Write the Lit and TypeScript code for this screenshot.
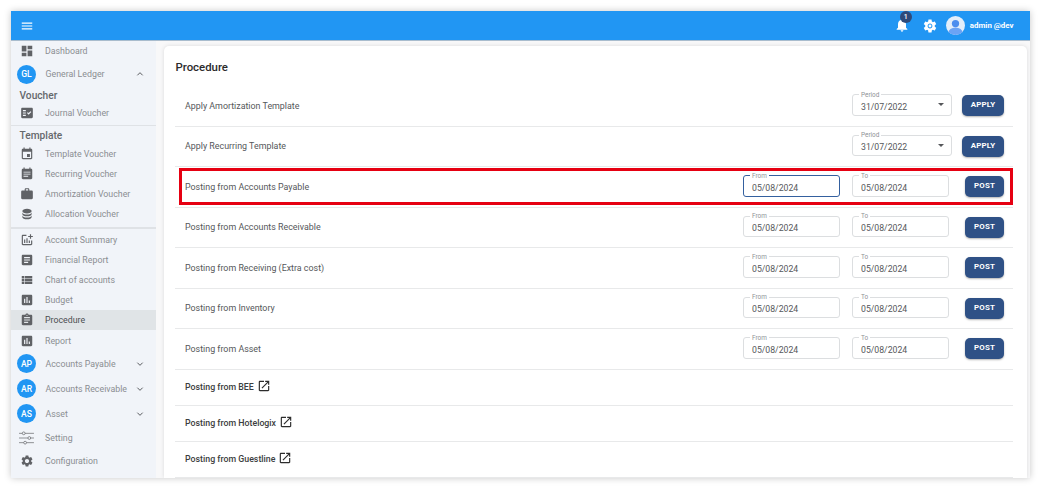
import { LitElement, html, css, svg } from "lit";
import { customElement } from "lit/decorators.js";

const P: Record<string, string> = {
  dashboard: "M3 13h8V3H3v10zm0 8h8v-6H3v6zm10 0h8V11h-8v10zm0-18v6h8V3h-8z",
  fact: "M20 3H4c-1.1 0-2 .9-2 2v14c0 1.1.9 2 2 2h16c1.1 0 2-.9 2-2V5c0-1.1-.9-2-2-2zM10 17H5v-2h5v2zm0-4H5v-2h5v2zm0-4H5V7h5v2zm4.82 6L12 12.16l1.41-1.41 1.41 1.42L17.99 9l1.42 1.42L14.82 15z",
  event: "M17 12h-5v5h5v-5zM16 1v2H8V1H6v2H5c-1.11 0-1.99.9-1.99 2L3 19c0 1.1.89 2 2 2h14c1.1 0 2-.9 2-2V5c0-1.1-.9-2-2-2h-1V1h-2zm3 18H5V8h14v11z",
  recur: "M19 3h-1V1h-2v2H8V1H6v2H5c-1.1 0-2 .9-2 2v14c0 1.1.9 2 2 2h14c1.1 0 2-.9 2-2V5c0-1.1-.9-2-2-2zM6 8h12v1.5H6V8zm0 3.5h12V13H6v-1.5zM6 15h8v1.5H6V15z",
  work: "M20 6h-4V4c0-1.11-.89-2-2-2h-4c-1.11 0-2 .89-2 2v2H4c-1.11 0-1.99.89-1.99 2L2 19c0 1.11.89 2 2 2h16c1.11 0 2-.89 2-2V8c0-1.11-.89-2-2-2zm-6 0h-4V4h4v2z",
  db: "M12 3C7.58 3 4 4.79 4 7s3.58 4 8 4 8-1.79 8-4-3.58-4-8-4zM4 9v3c0 2.21 3.58 4 8 4s8-1.79 8-4V9c0 2.21-3.58 4-8 4s-8-1.79-8-4zm0 5v3c0 2.21 3.58 4 8 4s8-1.79 8-4v-3c0 2.21-3.58 4-8 4s-8-1.79-8-4z",
  addchart: "M22 5v2h-3v3h-2V7h-3V5h3V2h2v3h3zm-3 14H5V5h6V3H5c-1.1 0-2 .9-2 2v14c0 1.1.9 2 2 2h14c1.1 0 2-.9 2-2v-6h-2v6zm-4-6v4h2v-4h-2zm-4 4h2V9h-2v8zm-2 0v-6H7v6h2z",
  article: "M19 3H5c-1.1 0-2 .9-2 2v14c0 1.1.9 2 2 2h14c1.1 0 2-.9 2-2V5c0-1.1-.9-2-2-2zm-5 14H7v-2h7v2zm3-4H7v-2h10v2zm0-4H7V7h10v2z",
  list: "M3 14h4v-4H3v4zm0 5h4v-4H3v4zM3 9h4V5H3v4zm5 5h13v-4H8v4zm0 5h13v-4H8v4zM8 5v4h13V5H8z",
  assess: "M19 3H5c-1.1 0-2 .9-2 2v14c0 1.1.9 2 2 2h14c1.1 0 2-.9 2-2V5c0-1.1-.9-2-2-2zM9 17H7v-7h2v7zm4 0h-2V7h2v10zm4 0h-2v-4h2v4z",
  assign: "M19 3h-4.18C14.4 1.84 13.3 1 12 1c-1.3 0-2.4.84-2.82 2H5c-1.1 0-2 .9-2 2v14c0 1.1.9 2 2 2h14c1.1 0 2-.9 2-2V5c0-1.1-.9-2-2-2zm-7 0c.55 0 1 .45 1 1s-.45 1-1 1-1-.45-1-1 .45-1 1-1zm2 14H7v-2h7v2zm3-4H7v-2h10v2zm0-4H7V7h10v2z",
  gear: "M19.14,12.94c0.04-0.3,0.06-0.61,0.06-0.94c0-0.32-0.02-0.64-0.07-0.94l2.03-1.58c0.18-0.14,0.23-0.41,0.12-0.61 l-1.92-3.32c-0.12-0.22-0.37-0.29-0.59-0.22l-2.39,0.96c-0.5-0.38-1.03-0.7-1.62-0.94L14.4,2.81c-0.04-0.24-0.24-0.41-0.48-0.41 h-3.84c-0.24,0-0.43,0.17-0.47,0.41L9.25,5.35C8.66,5.59,8.12,5.92,7.63,6.29L5.24,5.33c-0.22-0.08-0.47,0-0.59,0.22L2.74,8.87 C2.62,9.08,2.66,9.34,2.86,9.48l2.03,1.58C4.84,11.36,4.8,11.69,4.8,12s0.02,0.64,0.07,0.94l-2.03,1.58 c-0.18,0.14-0.23,0.41-0.12,0.61l1.92,3.32c0.12,0.22,0.37,0.29,0.59,0.22l2.39-0.96c0.5,0.38,1.03,0.7,1.62,0.94l0.36,2.54 c0.05,0.24,0.24,0.41,0.48,0.41h3.84c0.24,0,0.44-0.17,0.47-0.41l0.36-2.54c0.59-0.24,1.13-0.56,1.62-0.94l2.39,0.96 c0.22,0.08,0.47,0,0.59-0.22l1.92-3.32c0.12-0.22,0.07-0.47-0.12-0.61L19.14,12.94z M12,15.6c-1.98,0-3.6-1.62-3.6-3.6 s1.62-3.6,3.6-3.6s3.6,1.62,3.6,3.6S13.98,15.6,12,15.6z",
  open: "M19 19H5V5h7V3H5c-1.11 0-2 .9-2 2v14c0 1.1.89 2 2 2h14c1.1 0 2-.9 2-2v-7h-2v7zM14 3v2h3.59l-9.83 9.83 1.41 1.41L19 6.41V10h2V3h-7z",
  bell: "M12 22c1.1 0 2-.9 2-2h-4c0 1.1.89 2 2 2zm6-6v-5c0-3.07-1.64-5.64-4.5-6.32V4c0-.83-.67-1.5-1.5-1.5s-1.5.67-1.5 1.5v.68C7.63 5.36 6 7.92 6 11v5l-2 2v1h16v-1l-2-2z",
};

const icon = (n: string, cls = "ic") =>
  html`<svg class=${cls} viewBox="0 0 24 24"><path d=${P[n]} fill="currentColor" fill-rule="evenodd"></path></svg>`;

const tune = html`<svg class="tune" viewBox="0 0 16 15" fill="none" stroke="currentColor" stroke-width=".7">
  ${svg`<path d="M0 2.5h3.5M6.5 2.5h9.5M0 7.5h9.5M12.5 7.5h3.5M0 12.5h5M8 12.5h8"></path>
  <circle cx="5" cy="2.5" r="1.5"></circle><circle cx="11" cy="7.5" r="1.5"></circle><circle cx="6.5" cy="12.5" r="1.5"></circle>`}
</svg>`;

const chev = (up: boolean) =>
  html`<svg class="chev" viewBox="0 0 12 8"><path d=${up ? "M2 6l4-4 4 4" : "M2 2l4 4 4-4"} fill="none" stroke="currentColor" stroke-width="1.5"></path></svg>`;

type Row = { label: string; mode: "period" | "range"; focus?: boolean };
const rows: Row[] = [
  { label: "Apply Amortization Template", mode: "period" },
  { label: "Apply Recurring Template", mode: "period" },
  { label: "Posting from Accounts Payable", mode: "range", focus: true },
  { label: "Posting from Accounts Receivable", mode: "range" },
  { label: "Posting from Receiving (Extra cost)", mode: "range" },
  { label: "Posting from Inventory", mode: "range" },
  { label: "Posting from Asset", mode: "range" },
];
const links = ["Posting from BEE", "Posting from Hotelogix", "Posting from Guestline"];

@customElement("app-root")
export class AppRoot extends LitElement {
  static styles = css`
    :host { display: block; width: 1041px; height: 489px; background: #fff; padding: 11px; box-sizing: border-box; font-family: Roboto, "Liberation Sans", sans-serif; overflow: hidden; }
    .shell { width: 1019px; height: 467px; display: flex; flex-direction: column; overflow: hidden; box-shadow: 0 0 7px rgba(0,0,0,.22); background: #f8f8f9; }
    .top { height: 29px; flex: none; background: #2196f3; display: flex; align-items: center; color: #fff; border-bottom: 1px solid #a9bccd; }
    .burger { width: 14px; height: 14px; margin-left: 9px; }
    .spacer { flex: 1; }
    .bellw { position: relative; display: flex; width: 16px; height: 16px; margin-top: -1px; }
    .bellw svg { width: 16px; height: 16px; }
    .badge { position: absolute; left: 6px; top: -6px; width: 12px; height: 12px; border-radius: 50%; background: #2f4a79; font-size: 7px; font-weight: 500; line-height: 12px; text-align: center; color: #fff; }
    .cog { width: 16px; height: 16px; margin-left: 12px; }
    .avatar { width: 19px; height: 19px; margin-left: 8px; }
    .user { font-size: 7.9px; font-weight: 700; margin: 0 16.5px 0 5px; white-space: nowrap; }
    .body { flex: 1; display: flex; min-height: 0; }
    .side { width: 145px; flex: none; background: #f1f4f9; color: #8b8e92; font-size: 8.8px; }
    .it { height: 20.2px; display: flex; align-items: center; padding-left: 9px; }
    .it .ic { width: 14px; height: 14px; color: #606266; flex: none; }
    .it span { margin-left: 11px; }
    .it.active { background: #e0e4e7; color: #4c4e52; }
    .grp { height: 25.1px; display: flex; align-items: center; padding-left: 6px; }
    .it + .grp { margin-top: .5px; }
    .circle { width: 19px; height: 19px; border-radius: 50%; background: #2196f3; color: #fff; font-size: 8.6px; font-weight: 500; display: flex; align-items: center; justify-content: center; flex: none; }
    .grp span { margin-left: 9.5px; flex: 1; white-space: nowrap; }
    .chev { width: 8px; height: 6px; color: #5a5c60; margin-right: 12px; flex: none; }
    .sect { height: 16px; line-height: 17px; padding-left: 8.5px; font-size: 10.2px; font-weight: 500; color: #65686c; }
    .div { height: 1px; background: #dfe2e6; margin: 2px 0 1.5px; }
    .div.thick { height: 2px; margin: 2.6px 0 .7px; }
    .tune { width: 15px; height: 14px; color: #5a5c60; flex: none; margin-left: -1px; margin-right: 0; }
    .main { flex: 1; padding: 5px 3px 0 7.5px; min-width: 0; }
    .card { background: #fff; border-radius: 5px 5px 0 0; height: 100%; box-shadow: 0 0 4px rgba(0,0,0,.12); padding: 0 14px 0 11.5px; position: relative; }
    h1 { margin: 0; font-size: 11.4px; font-weight: 500; color: #2b2b2b; height: 40px; line-height: 42px; padding-left: .5px; }
    .row { height: 39.5px; display: flex; align-items: center; padding: 0 9px 0 10px; border-bottom: 1px solid #e8e9ea; color: #55575a; font-size: 8.9px; }
    .row .lbl { flex: 1; }
    .row.link { height: 34.2px; padding-bottom: 1px; font-weight: 500; color: #3b3d40; font-size: 8.8px; }
    .row.link .lbl { flex: none; }
    .row.link svg { width: 14px; height: 14px; margin: -2px 0 0 3px; color: #2c2c2c; }
    fieldset { margin: -5px 0 0 0; padding: 0 0 0 8px; border: 1px solid #dcdee0; border-radius: 3px; height: 25px; box-sizing: border-box; display: flex; align-items: center; font-size: 8.7px; color: #55575a; min-width: 0; }
    fieldset.w97 { width: 97px; }
    fieldset.w100 { width: 100px; padding-right: 6px; }
    fieldset.focus { border: 1px solid #34609f; }
    legend { font-size: 6.4px; line-height: 8px; color: #8f9296; padding: 0 2px; margin-left: -2px; }
    .val { flex: 1; }
    .caret { width: 0; height: 0; border-left: 3px solid transparent; border-right: 3px solid transparent; border-top: 3px solid #55575a; margin-right: 1px; position: relative; top: -2px; }
    .gap12 { width: 12px; flex: none; }
    .btn { height: 21px; border: 0; border-radius: 5px; background: #2f5186; color: #fff; font: 700 7.9px Roboto, sans-serif; letter-spacing: .2px; box-shadow: 0 1px 2px rgba(0,0,0,.3); padding: 0 0 2px; }
    .btn.post { width: 39px; margin-left: 16px; }
    .btn.apply { width: 42px; margin-left: 10px; }
    .mark { position: absolute; left: 15px; top: 122px; width: 834px; height: 37px; border: 3px solid #e60012; box-sizing: border-box; pointer-events: none; }
  `;

  side() {
    const it = (n: string, t: string, active = false) =>
      html`<div class="it ${active ? "active" : ""}">${icon(n)}<span>${t}</span></div>`;
    const grp = (c: string, t: string, up = false) =>
      html`<div class="grp"><div class="circle">${c}</div><span>${t}</span>${chev(up)}</div>`;
    return html`<nav class="side">
      ${it("dashboard", "Dashboard")}
      ${grp("GL", "General Ledger", true)}
      <div class="sect">Voucher</div>
      ${it("fact", "Journal Voucher")}
      <div class="div"></div>
      <div class="sect">Template</div>
      ${it("event", "Template Voucher")}
      ${it("recur", "Recurring Voucher")}
      ${it("work", "Amortization Voucher")}
      ${it("db", "Allocation Voucher")}
      <div class="div thick"></div>
      ${it("addchart", "Account Summary")}
      ${it("article", "Financial Report")}
      ${it("list", "Chart of accounts")}
      ${it("assess", "Budget")}
      ${it("assign", "Procedure", true)}
      ${it("assess", "Report")}
      ${grp("AP", "Accounts Payable")}
      ${grp("AR", "Accounts Receivable")}
      ${grp("AS", "Asset")}
      <div class="it" style="height:24px">${tune}<span>Setting</span></div>
      ${it("gear", "Configuration")}
    </nav>`;
  }

  row(r: Row) {
    if (r.mode === "period") {
      return html`<div class="row"><div class="lbl">${r.label}</div>
        <fieldset class="w100"><legend>Period</legend><div class="val">31/07/2022</div><div class="caret"></div></fieldset>
        <button class="btn apply">APPLY</button></div>`;
    }
    return html`<div class="row"><div class="lbl">${r.label}</div>
      <fieldset class="w97 ${r.focus ? "focus" : ""}"><legend>From</legend><div class="val">05/08/2024</div></fieldset>
      <div class="gap12"></div>
      <fieldset class="w97"><legend>To</legend><div class="val">05/08/2024</div></fieldset>
      <button class="btn post">POST</button></div>`;
  }

  render() {
    return html`<div class="shell">
      <header class="top">
        <svg class="burger" viewBox="0 0 24 24"><path d="M3 18h18v-2H3v2zm0-5h18v-2H3v2zm0-7v2h18V6H3z" fill="currentColor"></path></svg>
        <div class="spacer"></div>
        <div class="bellw">${icon("bell", "")}<div class="badge">1</div></div>
        <svg class="cog" viewBox="0 0 24 24"><path d=${P.gear} fill="#fff" fill-rule="evenodd"></path><circle cx="12" cy="12" r="2.2" fill="#fff"></circle></svg>
        <svg class="avatar" viewBox="0 0 24 24"><defs><clipPath id="c"><circle cx="12" cy="12" r="12"></circle></clipPath></defs><circle cx="12" cy="12" r="12" fill="#e3eefa"></circle><g clip-path="url(#c)"><circle cx="12" cy="9.5" r="4.6" fill="#4c8dee"></circle><ellipse cx="12" cy="21" rx="9" ry="6.5" fill="#6ba3f5"></ellipse></g></svg>
        <div class="user">admin @dev</div>
      </header>
      <div class="body">
        ${this.side()}
        <main class="main">
          <section class="card">
            <h1>Procedure</h1>
            ${rows.map((r) => this.row(r))}
            ${links.map((l) => html`<div class="row link"><div class="lbl">${l}</div>${icon("open", "")}</div>`)}
            <div class="mark"></div>
          </section>
        </main>
      </div>
    </div>`;
  }
}
